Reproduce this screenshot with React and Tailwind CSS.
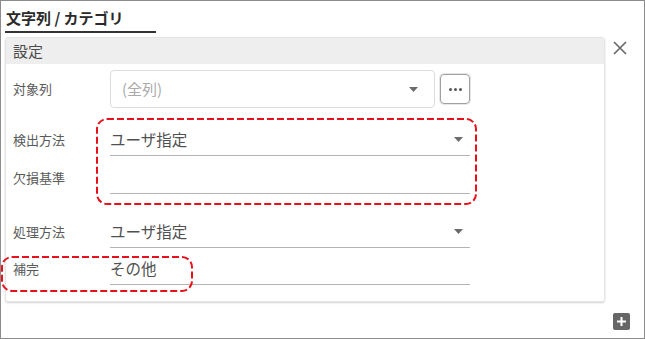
import React from "react";

const font = { fontFamily: '"Noto Sans CJK JP", "Noto Sans", sans-serif' };

const Caret = ({ className = "" }) => (
  <svg width="9" height="5" viewBox="0 0 9 5" className={className}>
    <path d="M0 0 L9 0 L4.5 5 Z" fill="#6b6b6b" />
  </svg>
);

const DashedBox = ({ className = "", w, h }) => (
  <svg width={w} height={h} className={`absolute pointer-events-none ${className}`}>
    <rect
      x="1"
      y="1"
      width={w - 2}
      height={h - 2}
      rx="10"
      fill="none"
      stroke="#e8101a"
      strokeWidth="2"
      strokeDasharray="7 3"
    />
  </svg>
);

const Label = ({ children }) => (
  <div className="w-[104px] shrink-0 pl-[7px] text-[13px] text-[#5a5a5a]">{children}</div>
);

const LineField = ({ value, caret = false }) => (
  <div className="w-[360px] h-[32px] flex items-center justify-between border-b border-[#b4b4b4] pr-[7px]">
    <span className="text-[15.5px] text-[#505050] leading-none">{value}</span>
    {caret && <Caret />}
  </div>
);

export default function App() {
  return (
    <div
      className="relative w-[645px] h-[339px] bg-white border border-[#8c8c8c] overflow-hidden"
      style={font}
    >
      {/* tab title */}
      <div className="ml-[4px] w-[151px] pl-[1px] pt-[6px] pb-[3px] leading-[21px] border-b-2 border-[#333] text-[15px] font-bold text-[#2a2a2a]">
        文字列 / カテゴリ
      </div>

      <div className="flex mt-[4px] ml-[4px]">
        {/* settings card */}
        <div className="w-[600px] border border-[#e4e4e4] rounded-[3px] shadow-[0_1px_2px_rgba(0,0,0,0.18)] pb-[16px]">
          <div className="h-[26px] bg-[#eeeeee] flex items-center pl-[7px] text-[15px] text-[#4a4a4a]">
            設定
          </div>

          {/* 対象列 */}
          <div className="flex items-center mt-[6px] h-[38px]">
            <Label>対象列</Label>
            <div className="w-[325px] h-[38px] border border-[#dcdcdc] rounded-[4px] flex items-center justify-between pl-[11px] pr-[16px]">
              <span className="text-[15px] text-[#aaa]">(全列)</span>
              <Caret />
            </div>
            <button className="ml-[5px] w-[30px] h-[30px] border border-[#a0a0a0] rounded-[4px] flex items-center justify-center gap-[2px] shadow-[0_0_0_1px_#e6e6e6]">
              <span className="w-[3px] h-[3px] rounded-full bg-[#555]" />
              <span className="w-[3px] h-[3px] rounded-full bg-[#555]" />
              <span className="w-[3px] h-[3px] rounded-full bg-[#555]" />
            </button>
          </div>

          {/* 検出方法 */}
          <div className="flex items-center mt-[16px]">
            <Label>検出方法</Label>
            <LineField value="ユーザ指定" caret />
          </div>

          {/* 欠損基準 */}
          <div className="flex items-center mt-[6px]">
            <Label>欠損基準</Label>
            <LineField value="" />
          </div>

          {/* 処理方法 */}
          <div className="flex items-center mt-[22px]">
            <Label>処理方法</Label>
            <LineField value="ユーザ指定" caret />
          </div>

          {/* 補完 */}
          <div className="flex items-center mt-[5px]">
            <Label>補完</Label>
            <LineField value="その他" />
          </div>
        </div>

        {/* close */}
        <div className="ml-[8px] mt-[4px]">
          <svg width="14" height="14" viewBox="0 0 14 14">
            <path d="M1 1 L13 13 M13 1 L1 13" stroke="#666" strokeWidth="1.6" />
          </svg>
        </div>
      </div>

      {/* add */}
      <div className="flex justify-end pr-[14px] mt-[11px]">
        <div className="w-[17px] h-[17px] bg-[#666] rounded-[2px] flex items-center justify-center">
          <svg width="11" height="11" viewBox="0 0 11 11">
            <path d="M5.5 1 V10 M1 5.5 H10" stroke="#fff" strokeWidth="2" />
          </svg>
        </div>
      </div>

      {/* annotation boxes */}
      <DashedBox className="left-[95px] top-[117px]" w={381} h={87} />
      <DashedBox className="left-[0px] top-[255px]" w={192} h={36} />
    </div>
  );
}
